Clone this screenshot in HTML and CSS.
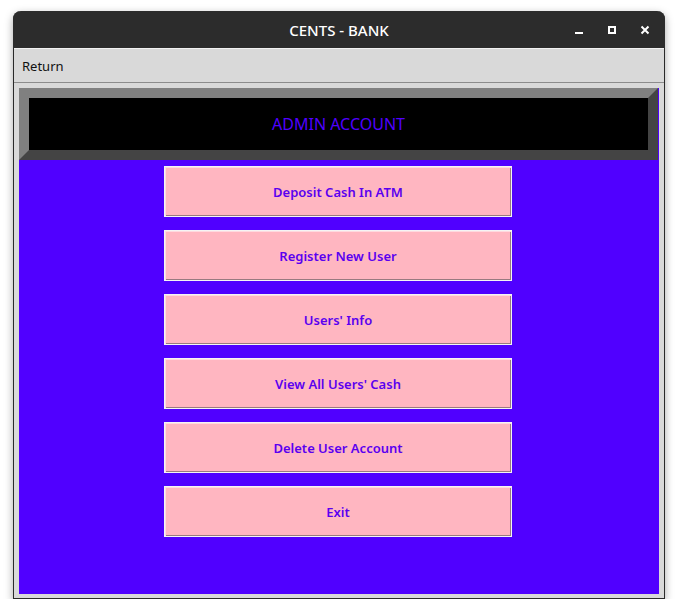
FILE: index.html
```html
<!DOCTYPE html>
<html>
<head>
<meta charset="utf-8">
<link rel="stylesheet" href="styles.css">
</head>
<body>
<div class="window">
  <div class="titlebar">
    <span class="title">CENTS - BANK</span>
    <div class="controls">
      <svg class="ctl" width="12" height="12" viewBox="0 0 12 12"><rect x="2" y="8" width="8" height="2" fill="#fff"/></svg>
      <svg class="ctl" width="12" height="12" viewBox="0 0 12 12"><rect x="3" y="3" width="6" height="6" fill="none" stroke="#fff" stroke-width="2"/></svg>
      <svg class="ctl" width="12" height="12" viewBox="0 0 12 12"><path d="M2.5 2.5 L9.5 9.5 M9.5 2.5 L2.5 9.5" stroke="#fff" stroke-width="2"/></svg>
    </div>
  </div>
  <div class="menubar"><span class="menuitem">Return</span></div>
  <div class="body">
    <div class="content">
      <div class="header"><div class="header-inner">ADMIN ACCOUNT</div></div>
      <div class="buttons">
        <button class="btn">Deposit Cash In ATM</button>
        <button class="btn">Register New User</button>
        <button class="btn">Users' Info</button>
        <button class="btn">View All Users' Cash</button>
        <button class="btn">Delete User Account</button>
        <button class="btn">Exit</button>
      </div>
    </div>
  </div>
</div>
</body>
</html>
```
FILE: styles.css
```css
html, body {
  margin: 0;
  padding: 0;
  background: #ffffff;
}
body {
  padding: 11px 0 0 13px;
  font-family: "Noto Sans", "DejaVu Sans", sans-serif;
}
.window {
  width: 652px;
  box-sizing: border-box;
  border-radius: 8px 8px 0 0;
  box-shadow: 0 3px 9px rgba(0,0,0,0.35);
  background: #d9d9d9;
  border: 1px solid #2a2a2a;
  border-top: none;
}
.titlebar {
  height: 37px;
  background: #2c2c2c;
  border-radius: 8px 8px 0 0;
  margin: 0 -1px;
  display: flex;
  align-items: center;
  justify-content: center;
  position: relative;
}
.title {
  color: #ffffff;
  font-size: 15px;
  font-weight: 500;
}
.controls {
  position: absolute;
  right: 14px;
  top: 13px;
  display: flex;
  gap: 21px;
}
.ctl { display: block; }
.menubar {
  height: 35px;
  box-sizing: border-box;
  border-top: 1px solid #f2f2f2;
  border-bottom: 1px solid #8c8c8c;
  background: #d9d9d9;
  display: flex;
  align-items: center;
  padding-left: 8px;
  padding-top: 1px;
}
.menuitem {
  font-size: 13px;
  color: #111;
}
.body {
  padding: 5px 5px 4px 5px;
}
.content {
  height: 506px;
  background: #5000ff;
  display: flex;
  flex-direction: column;
  align-items: center;
}
.header {
  align-self: stretch;
  margin-right: 1px;
  border: 10px solid;
  border-color: #808080 #444444 #444444 #808080;
  background: #000;
}
.header-inner {
  height: 52px;
  display: flex;
  align-items: center;
  justify-content: center;
  color: #5000ff;
  font-size: 16px;
}
.buttons {
  margin-top: 6px;
  display: flex;
  flex-direction: column;
  gap: 13px;
  margin-left: -2px;
}
.btn {
  width: 348px;
  height: 51px;
  box-sizing: border-box;
  background: #ffb6c1;
  border: 1px solid #f4f4f4;
  box-shadow: inset 1px 1px #ffd9df, inset -1px -1px #9a7a80;
  color: #5a00f0;
  font-family: "Noto Sans", "DejaVu Sans", sans-serif;
  font-weight: 600;
  font-size: 13px;
  padding: 0;
}
```
